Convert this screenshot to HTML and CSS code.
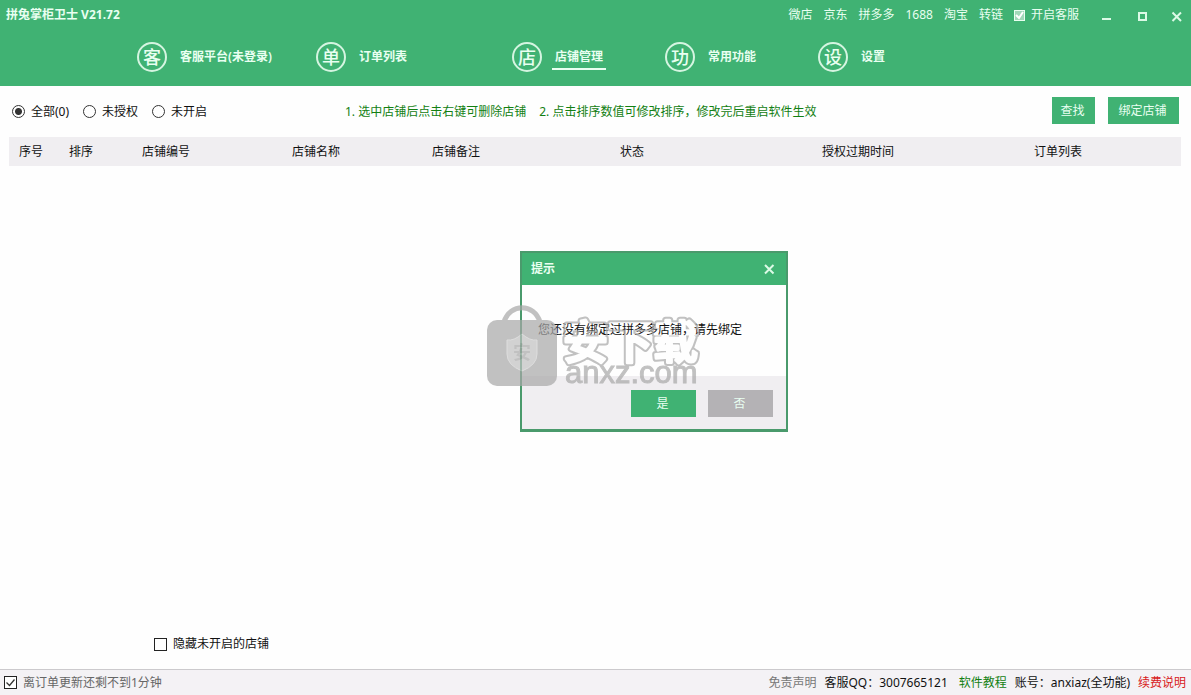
FILE: index.html
```html
<!DOCTYPE html>
<html lang="zh-CN">
<head>
<meta charset="utf-8">
<title>拼兔掌柜卫士 V21.72</title>
<link rel="stylesheet" href="styles.css">
</head>
<body>
<div class="app">
  <header class="header">
    <div class="titlebar">
      <h1 class="title">拼兔掌柜卫士 V21.72</h1>
      <div class="links">
        <a href="#">微店</a>
        <a href="#">京东</a>
        <a href="#">拼多多</a>
        <a href="#">1688</a>
        <a href="#">淘宝</a>
        <a href="#">转链</a>
        <label class="service"><input class="tick tick-light" type="checkbox" checked>开启客服</label>
      </div>
      <div class="window-buttons">
        <button class="icon-button" type="button" aria-label="最小化"><svg width="12" height="12" viewBox="0 0 12 12"><path d="M1 8h9" stroke="#dcfae6" stroke-width="2"/></svg></button>
        <button class="icon-button" type="button" aria-label="最大化"><svg width="12" height="12" viewBox="0 0 12 12"><rect x="3" y="2" width="7" height="7" fill="none" stroke="#dcfae6" stroke-width="2"/></svg></button>
        <button class="icon-button" type="button" aria-label="关闭"><svg width="12" height="12" viewBox="0 0 12 12"><path d="M1.500 1.500l8.500 8.500M10 1.500l-8.500 8.500" stroke="#dcfae6" stroke-width="2"/></svg></button>
      </div>
    </div>
    <nav class="nav">
      <a class="nav-item" href="#"><span class="badge">客</span><span class="nav-label">客服平台(未登录)</span></a>
      <a class="nav-item" href="#"><span class="badge">单</span><span class="nav-label">订单列表</span></a>
      <a class="nav-item active" href="#"><span class="badge">店</span><span class="nav-label">店铺管理</span></a>
      <a class="nav-item" href="#"><span class="badge">功</span><span class="nav-label">常用功能</span></a>
      <a class="nav-item" href="#"><span class="badge">设</span><span class="nav-label">设置</span></a>
    </nav>
  </header>

  <main class="main">
    <div class="toolbar">
      <div class="filters">
        <label class="option"><input class="radio" type="radio" name="filter" checked>全部(0)</label>
        <label class="option"><input class="radio" type="radio" name="filter">未授权</label>
        <label class="option"><input class="radio" type="radio" name="filter">未开启</label>
      </div>
      <p class="hint"><span>1. 选中店铺后点击右键可删除店铺</span><span>2. 点击排序数值可修改排序，修改完后重启软件生效</span></p>
      <button class="button find" type="button">查找</button>
      <button class="button bind" type="button">绑定店铺</button>
    </div>

    <table class="shops">
      <colgroup>
        <col class="c-index"><col class="c-sort"><col class="c-id"><col class="c-name"><col class="c-note"><col class="c-state"><col class="c-expiry"><col>
      </colgroup>
      <thead>
        <tr><th>序号</th><th>排序</th><th>店铺编号</th><th>店铺名称</th><th>店铺备注</th><th>状态</th><th>授权过期时间</th><th>订单列表</th></tr>
      </thead>
    </table>

    <label class="hide-closed"><input class="tick" type="checkbox">隐藏未开启的店铺</label>
  </main>

  <footer class="status">
    <label class="countdown"><input class="tick" type="checkbox" checked>离订单更新还剩不到1分钟</label>
    <div class="status-info">
      <a class="muted" href="#">免责声明</a>
      <span class="qq">客服QQ：3007665121</span>
      <a class="green" href="#">软件教程</a>
      <span>账号：anxiaz(全功能)</span>
      <a class="red" href="#">续费说明</a>
    </div>
  </footer>

  <section class="dialog" role="dialog" aria-labelledby="dialog-title">
    <div class="dialog-head">
      <h2 class="dialog-title" id="dialog-title">提示</h2>
      <button class="icon-button" type="button" aria-label="关闭"><svg width="12" height="12" viewBox="0 0 12 12"><path d="M2 2l8.500 8.500M10.500 2l-8.500 8.500" stroke="#dcfae6" stroke-width="2"/></svg></button>
    </div>
    <p class="dialog-text">您还没有绑定过拼多多店铺，请先绑定</p>
    <div class="dialog-actions">
      <button class="button choice" type="button">是</button>
      <button class="button choice secondary" type="button">否</button>
    </div>
  </section>

  <svg class="watermark" width="220" height="90" viewBox="0 0 220 90" aria-hidden="true">
    <defs>
      <mask id="hollow" maskUnits="userSpaceOnUse" x="0" y="0" width="220" height="90">
        <rect width="220" height="90" fill="#fff"/>
        <text class="mark-cn" x="78" y="56" fill="#000" stroke="#000" stroke-width="3">安下载</text>
      </mask>
    </defs>
    <path d="M19 19C25 0 49 0 55 19" fill="none" stroke="#a8a8a8" stroke-width="5"/>
    <rect x="2" y="17" width="70" height="66" rx="10" fill="#a8a8a8"/>
    <path d="M37 31q8 7 15 6v14q0 11-15 17Q22 62 22 51V37q7 1 15-6z" fill="#c0c0c0" stroke="#d0d0d0"/>
    <text class="mark-shield" x="28" y="56">安</text>
    <g mask="url(#hollow)"><text class="mark-cn" x="78" y="56" fill="#a8a8a8" stroke="#a8a8a8" stroke-width="7">安下载</text></g>
    <text class="mark-en" x="80" y="80">anxz.com</text>
  </svg>
</div>
</body>
</html>
```
FILE: styles.css
```css
* { box-sizing: border-box; }

body {
  margin: 0;
  background: #fefefe;
  color: #111;
  font: 12px/16px "Noto Sans", "Noto Sans CJK SC", sans-serif;
}

h1, h2, p { margin: 0; font-size: 12px; }
a { color: inherit; text-decoration: none; }

button, input { font: inherit; margin: 0; }
label { display: flex; align-items: center; }

.app {
  position: relative;
  display: flex;
  flex-direction: column;
  min-height: 100vh;
}

/* Header */
.header {
  height: 86px;
  background: #40b273;
  color: #e9fff1;
}

.titlebar {
  display: flex;
  align-items: center;
  height: 30px;
  padding: 0 8px 0 6px;
}

.title { flex: 1; font-weight: 700; }

.links { display: flex; gap: 11px; }
.service { gap: 6px; }

.window-buttons {
  display: flex;
  gap: 23px;
  margin-left: 22px;
  padding-top: 3px;
}

.icon-button {
  display: flex;
  padding: 0;
  border: 0;
  background: none;
}

.nav {
  display: grid;
  grid-template-columns: 179px 196px 153px 153px 1fr;
  padding: 12px 0 0 137px;
}

.nav-item {
  display: flex;
  align-items: center;
  gap: 10px;
  font-weight: 600;
}

.badge {
  display: flex;
  align-items: center;
  justify-content: center;
  width: 30px;
  height: 30px;
  border: 2px solid #d5f5e1;
  border-radius: 50%;
  font-size: 18px;
  line-height: 24px;
  font-weight: 500;
}

.nav-label {
  padding: 3px;
  border-bottom: 2px solid transparent;
  border-top: 2px solid transparent;
}

.active .nav-label { border-bottom-color: #e9fff1; }

/* Form controls */
.tick {
  appearance: none;
  width: 13px;
  height: 13px;
  border: 1px solid #222;
  background: #fff center / 11px 11px no-repeat;
}

.tick:checked {
  background-image: url("data:image/svg+xml,%3Csvg xmlns='http://www.w3.org/2000/svg' viewBox='0 0 11 11'%3E%3Cpath d='M1.5 5.5l3 3 5-6' fill='none' stroke='%23333' stroke-width='1.3'/%3E%3C/svg%3E");
}

.tick-light {
  width: 11px;
  height: 11px;
  border-color: #e9fff1;
  background-color: #a2d9b9;
}

.tick-light:checked {
  background-image: url("data:image/svg+xml,%3Csvg xmlns='http://www.w3.org/2000/svg' viewBox='0 0 11 11'%3E%3Cpath d='M2 5l3 3 4-6' fill='none' stroke='%23fff' stroke-width='2'/%3E%3C/svg%3E");
}

.radio {
  appearance: none;
  width: 13px;
  height: 13px;
  border: 1px solid #333;
  border-radius: 50%;
  background: #fff;
}

.radio:checked { background: radial-gradient(circle, #333 3px, #fff 4px); }

.button {
  height: 27px;
  padding: 0 2px 0 0;
  border: 0;
  background: #40b273;
  color: #e9fff1;
}

/* Content */
.main {
  flex: 1;
  display: flex;
  flex-direction: column;
  padding: 11px 10px 17px 9px;
}

.toolbar {
  display: flex;
  align-items: center;
  padding: 0 2px 0 3px;
}

.filters { display: flex; gap: 14px; width: 333px; padding-top: 2px; }
.option { gap: 6px; }

.hint {
  flex: 1;
  display: flex;
  gap: 13px;
  padding-top: 2px;
  color: #128012;
}

.find { width: 43px; }
.bind { width: 71px; margin-left: 13px; }

.shops {
  width: 100%;
  margin-top: 13px;
  table-layout: fixed;
  border-collapse: collapse;
  background: #f0eef1;
}

.shops th {
  height: 29px;
  padding: 0 0 0 10px;
  text-align: left;
  font-weight: 400;
}

.c-index { width: 50px; }
.c-sort { width: 73px; }
.c-id { width: 150px; }
.c-name { width: 140px; }
.c-note { width: 188px; }
.c-state { width: 202px; }
.c-expiry { width: 212px; }

.hide-closed {
  gap: 6px;
  margin: auto auto 0 145px;
}

/* Status bar */
.status {
  display: flex;
  align-items: center;
  justify-content: space-between;
  height: 26px;
  padding: 0 5px 0 4px;
  border-top: 1px solid #cccacd;
  background: #f4f2f5;
}

.countdown { gap: 6px; color: #666; }
.status-info { display: flex; gap: 8px; }
.qq { margin-right: 3px; }
.muted { color: #777; }
.green { color: #128012; }
.red { color: #d82020; }

/* Message window floating over the content */
.dialog {
  position: absolute;
  left: 520px;
  top: 251px;
  width: 268px;
  border: 2px solid #4a9a6c;
  border-bottom-width: 3px;
  background: #fefefe;
}

.dialog-head {
  display: flex;
  align-items: center;
  justify-content: space-between;
  height: 32px;
  padding: 0 11px 0 9px;
  background: #40b273;
}

.dialog-title { color: #e9fff1; font-weight: 600; }
.dialog-text { padding: 37px 16px 38px; }

.dialog-actions {
  display: flex;
  justify-content: flex-end;
  gap: 12px;
  padding: 14px 13px 12px;
  background: #f0eef1;
}

.choice { width: 65px; }
.secondary { background: #b4b2b5; }

.watermark {
  position: absolute;
  left: 485px;
  top: 303px;
  opacity: 0.7;
  pointer-events: none;
}

.mark-cn {
  font: 500 45px "Noto Sans CJK SC", sans-serif;
  stroke-linejoin: round;
}

.mark-en {
  font: 31px "Liberation Sans", sans-serif;
  fill: #a8a8a8;
  stroke: #a8a8a8;
}

.mark-shield {
  font: 700 18px "Noto Sans CJK SC", sans-serif;
  fill: #a8a8a8;
}
```
